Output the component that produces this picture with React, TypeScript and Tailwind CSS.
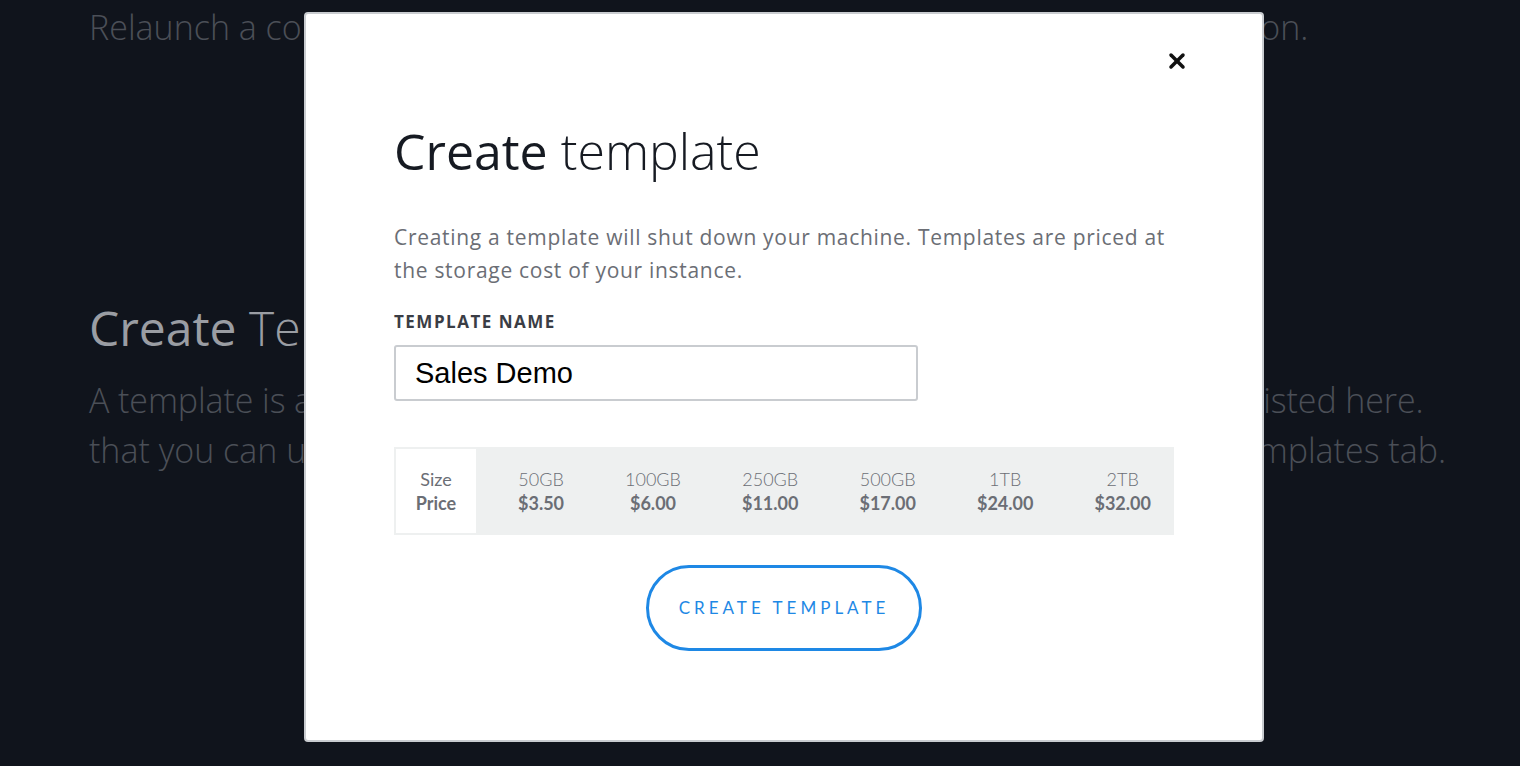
import { X } from 'lucide-react';

const sizes = [
  { size: '50GB', price: '$3.50' },
  { size: '100GB', price: '$6.00' },
  { size: '250GB', price: '$11.00' },
  { size: '500GB', price: '$17.00' },
  { size: '1TB', price: '$24.00' },
  { size: '2TB', price: '$32.00' },
];

export default function App() {
  return (
    <div className="relative h-[766px] overflow-hidden bg-[#10141c] font-['Open_Sans',sans-serif]">
      {/* page behind the modal */}
      <div className="px-[89px]">
        <p className="pt-[2px] text-[34px] font-light leading-[50px] text-[#4b4f57] whitespace-nowrap">
          Relaunch a copy of any saved machine in seconds, from its stored configuration.
        </p>
        <h2 className="mt-[246px] text-[48px] leading-[60px] text-[#9a9da3]">
          Create <span className="font-light">Templates</span>
        </h2>
        <p className="mt-[17px] text-[34px] font-light leading-[50px] text-[#4b4f57] whitespace-nowrap">
          <span className="tracking-[-0.1px]">A template is a stored copy of your machine's disks. All of your templates are listed here.</span>
          <br />
          that you can use to launch new machines. You can manage them from the templates tab.
        </p>
      </div>

      {/* modal */}
      <div className="absolute left-[304px] top-[12px] w-[960px] h-[730px] bg-white rounded-[4px] border-2 border-[#c9ccd0]">
        <button className="absolute right-[73px] top-[35px] text-[#111] cursor-pointer">
          <X size={24} strokeWidth={3.5} />
        </button>
        <div className="pl-[88px] pr-[88px] pt-[107px]">
          <h1 className="text-[50px] leading-[60px] text-[#161a22]">
            Create <span className="font-light">template</span>
          </h1>
          <p className="mt-[40px] text-[21px] tracking-[0.7px] leading-[33px] text-[#6b6e75]">
            Creating a template will shut down your machine. Templates are priced at the storage cost of your instance.
          </p>
          <label className="block mt-[25px] text-[17px] leading-[20px] font-bold tracking-[1.5px] text-[#3a3d45]">
            TEMPLATE NAME
          </label>
          <div className="mt-[13px] w-[524px] h-[56px] border-2 border-[#c9ccd0] rounded-[3px] flex items-center px-[19px]">
            <span className="font-['Liberation_Sans',sans-serif] text-[29px] leading-[36px] text-black">Sales Demo</span>
          </div>

          <div className="mt-[46px] w-[780px] h-[88px] bg-[#eef0f0] p-[2px] flex font-['Lato',sans-serif] text-[18px] text-[#6b6e75]">
            <div className="w-[80px] bg-white flex flex-col items-center justify-center leading-[24px]">
              <span>Size</span>
              <span className="font-bold">Price</span>
            </div>
            <div className="flex-1 flex items-center gap-[61px] pl-[42px]">
              {sizes.map(s => (
                <div key={s.size} className="flex flex-col items-center leading-[24px]">
                  <span className="font-light">{s.size}</span>
                  <span className="font-bold">{s.price}</span>
                </div>
              ))}
            </div>
          </div>

          <div className="mt-[30px] flex justify-center">
            <button className="w-[276px] h-[86px] rounded-full border-[3px] border-[#1e88e5] text-[#1e88e5] text-[17px] tracking-[4px] font-['Lato',sans-serif] cursor-pointer">
              CREATE TEMPLATE
            </button>
          </div>
        </div>
      </div>
    </div>
  );
}
